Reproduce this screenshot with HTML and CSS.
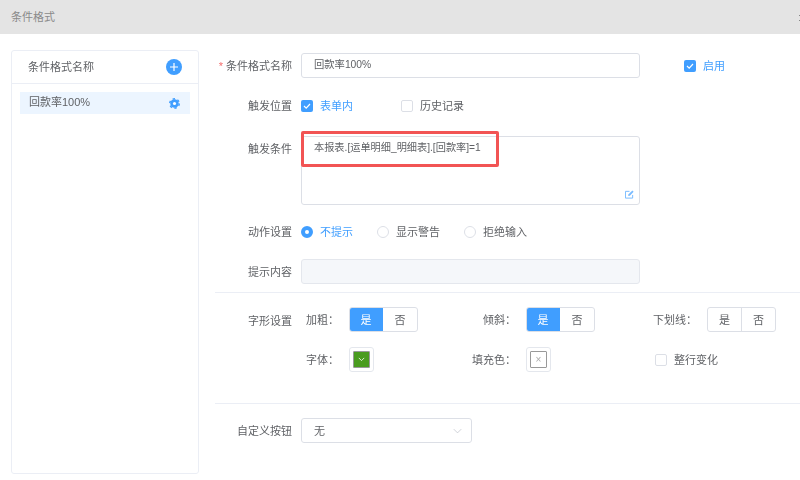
FILE: index.html
```html
<!DOCTYPE html>
<html lang="zh-CN">
<head>
    <meta charset="UTF-8">
    <title>条件格式</title>
    <link rel="stylesheet" href="styles.css">
</head>
<body>
    <div class="head">
        <span class="txt">条件格式</span>
        <svg class="head_close" viewBox="0 0 8 8"><path d="M1 1l6 6M7 1L1 7" stroke="#888" stroke-width="1"/></svg>
    </div>

    <div class="content">
        <!-- 左侧列表 -->
        <div class="side">
            <div class="side_head">
                <span class="txt">条件格式名称</span>
                <svg class="icon_add" viewBox="0 0 16 16"><circle cx="8" cy="8" r="8" fill="#409eff"/><path d="M8 4v8M4 8h8" stroke="#fff" stroke-width="1.2"/></svg>
            </div>
            <div class="side_item">
                <span class="side_text">回款率100%</span>
                <svg class="icon_gear" viewBox="0 0 12 12"><circle cx="6" cy="6" r="4.600" fill="#409eff"/><circle cx="6" cy="6" r="5.200" fill="none" stroke="#409eff" stroke-width="1.600" stroke-dasharray="2.600 2.845"/><circle cx="6" cy="6" r="1.700" fill="#fff"/></svg>
            </div>
        </div>

        <!-- 右侧表单 -->
        <div class="form">
            <div class="row row_name">
                <label class="row_label"><i>*</i> 条件格式名称</label>
                <div class="input">回款率100%</div>
                <div class="check check_enable">
                    <span class="box on"><svg viewBox="0 0 12 12"><path d="M3 6l2.200 2.200L9 4" fill="none" stroke="#fff" stroke-width="1.200"/></svg></span>
                    <span class="txt active">启用</span>
                </div>
            </div>

            <div class="row row_place">
                <label class="row_label">触发位置</label>
                <div class="check check_form">
                    <span class="box on"><svg viewBox="0 0 12 12"><path d="M3 6l2.200 2.200L9 4" fill="none" stroke="#fff" stroke-width="1.200"/></svg></span>
                    <span class="txt active">表单内</span>
                </div>
                <div class="check">
                    <span class="box"></span>
                    <span class="txt">历史记录</span>
                </div>
            </div>

            <div class="row row_cond">
                <label class="row_label">触发条件</label>
                <div class="textarea">
                    本报表.[运单明细_明细表].[回款率]=1
                    <svg class="icon_edit" viewBox="0 0 10 10"><path d="M8.500 5.500V9h-8V1.500H5" fill="none" stroke="#79bbff" stroke-width="1.100"/><path d="M3.500 6.700l.4-1.900L8.200.6l1.400 1.400-4.200 4.300z" fill="#79bbff"/></svg>
                    <div class="mark"></div>
                </div>
            </div>

            <div class="row row_action">
                <label class="row_label">动作设置</label>
                <div class="radio radio_1"><span class="dot on"></span><span class="txt active">不提示</span></div>
                <div class="radio radio_2"><span class="dot"></span><span class="txt">显示警告</span></div>
                <div class="radio"><span class="dot"></span><span class="txt">拒绝输入</span></div>
            </div>

            <div class="row row_tip">
                <label class="row_label">提示内容</label>
                <div class="input input_off"></div>
            </div>

            <div class="line"></div>

            <div class="row row_font">
                <label class="row_label">字形设置</label>
                <div class="font_grid">
                    <span class="font_label">加粗：</span>
                    <div class="seg"><span class="on">是</span><span>否</span></div>
                    <span class="font_label">倾斜：</span>
                    <div class="seg"><span class="on">是</span><span>否</span></div>
                    <span class="font_label">下划线：</span>
                    <div class="seg"><span>是</span><span>否</span></div>

                    <span class="font_label">字体：</span>
                    <div class="swatch">
                        <span class="swatch_in green"><svg viewBox="0 0 10 6"><path d="M2 1l3 3 3-3" fill="none" stroke="#fff" stroke-width=".9"/></svg></span>
                    </div>
                    <span class="font_label">填充色：</span>
                    <div class="swatch">
                        <span class="swatch_in empty">×</span>
                    </div>
                    <div class="check check_line">
                        <span class="box"></span>
                        <span class="txt">整行变化</span>
                    </div>
                </div>
            </div>

            <div class="line line_2"></div>

            <div class="row row_btn">
                <label class="row_label">自定义按钮</label>
                <div class="select">
                    <span class="txt">无</span>
                    <svg viewBox="0 0 12 7"><path d="M1 1l5 5 5-5" fill="none" stroke="#c0c4cc" stroke-width="1"/></svg>
                </div>
            </div>
        </div>
    </div>
</body>
</html>
```

FILE: styles.css
```css
*{
    margin: 0;
    padding: 0;
    box-sizing: border-box;
}
body{
    width: 800px;
    height: 480px;
    overflow: hidden;
    background-color: #fff;
    color: #606266;
    font-size: 11px;
    font-family: "Liberation Sans", "Noto Sans CJK SC", sans-serif;
    filter: blur(.35px);
}
/* 文字往上提一点 */
.txt,.row_label,.font_label{
    padding-bottom: 2px;
}
.head{
    height: 34px;
    padding-left: 11px;
    display: flex;
    align-items: center;
    justify-content: space-between;
    background-color: #e4e4e4;
    color: #8a8a8a;
}
.head_close{
    width: 8px;
    height: 8px;
    margin-right: -6px;
    margin-top: 2px;
}
.content{
    display: flex;
    padding: 16px 0 0 11px;
}

/* 左侧列表 */
.side{
    width: 188px;
    height: 424px;
    border: 1px solid #ebeef5;
    border-radius: 3px;
}
.side_head{
    height: 33px;
    padding: 0 16px 0 16px;
    display: flex;
    align-items: center;
    justify-content: space-between;
    border-bottom: 1px solid #ebeef5;
}
.icon_add{
    width: 16px;
    height: 16px;
}
.side_item{
    height: 22px;
    margin: 8px 8px 0;
    padding: 0 10px 0 9px;
    display: flex;
    align-items: center;
    justify-content: space-between;
    background-color: #ecf5ff;
}
.side_text{
    margin-top: -4px;
}
.icon_gear{
    width: 11px;
    height: 11px;
}

/* 右侧表单 */
.form{
    flex: 1;
    margin-left: 16px;
    padding-top: 3px;
}
.row{
    display: flex;
    align-items: center;
}
.row_label{
    width: 77px;
    margin-right: 9px;
    flex-shrink: 0;
    text-align: right;
}
.row_label i{
    color: #f56c6c;
    font-style: normal;
}
.input{
    width: 339px;
    height: 25px;
    padding-left: 12px;
    font-size: 10.300px;
    line-height: 22px;
    border: 1px solid #dcdfe6;
    border-radius: 3px;
}
.input_off{
    background-color: #f5f7fa;
    border-color: #e4e7ed;
}
.row_place{
    margin-top: 15px;
    height: 25px;
}
.row_cond{
    margin-top: 18px;
    align-items: flex-start;
}
.row_cond .row_label{
    margin-top: 4px;
}
.row_action{
    margin-top: 14px;
    height: 25px;
}
.row_tip{
    margin-top: 15px;
}
.row_font{
    margin-top: 14px;
    align-items: flex-start;
}
.row_font .row_label{
    margin-top: 5px;
}
.row_btn{
    margin-top: 14px;
}
.line{
    height: 1px;
    margin-top: 8px;
    background-color: #ebeef5;
}
.line_2{
    margin-top: 31px;
}

/* 勾选框 单选框 */
.check,.radio{
    display: flex;
    align-items: center;
    gap: 7px;
}
.active{
    color: #409eff;
}
.box{
    width: 12px;
    height: 12px;
    border: 1px solid #dcdfe6;
    border-radius: 2px;
    display: block;
}
.box.on{
    border: none;
    background-color: #409eff;
}
.box svg{
    display: block;
}
.check_enable{
    margin-left: 44px;
}
.check_form{
    width: 100px;
}
.dot{
    width: 12px;
    height: 12px;
    border: 1px solid #dcdfe6;
    border-radius: 50%;
}
.dot.on{
    border: 4px solid #409eff;
}
.radio_1{
    width: 76px;
}
.radio_2{
    width: 87px;
}

/* 文本域 */
.textarea{
    width: 339px;
    height: 69px;
    padding: 4px 0 0 12px;
    font-size: 10.200px;
    line-height: 14px;
    border: 1px solid #dcdfe6;
    border-radius: 3px;
    position: relative;
}
.icon_edit{
    width: 9px;
    height: 9px;
    position: absolute;
    right: 5px;
    bottom: 5px;
}
.mark{
    position: absolute;
    left: -1px;
    top: -6px;
    width: 198px;
    height: 36px;
    border: 3px solid #f25454;
    border-radius: 2px;
}

/* 字形设置 */
.font_grid{
    display: grid;
    grid-template-columns: 48px 129px 48px 129px 52px 69px;
    row-gap: 15px;
    align-items: center;
}
.font_label{
    padding-right: 10px;
    text-align: right;
    white-space: nowrap;
    justify-self: end;
}
.seg{
    width: 69px;
    height: 25px;
    display: flex;
    border: 1px solid #dcdfe6;
    border-radius: 3px;
    overflow: hidden;
}
.seg span{
    flex: 1;
    padding-bottom: 2px;
    display: flex;
    align-items: center;
    justify-content: center;
}
.seg span + span{
    border-left: 1px solid #dcdfe6;
}
.seg .on{
    flex: none;
    width: 34px;
    margin: -1px 0 -1px -1px;
    background-color: #409eff;
    color: #fff;
}
.seg .on + span{
    border-left: none;
}
.swatch{
    width: 25px;
    height: 25px;
    padding: 3px;
    border: 1px solid #e4e7ed;
    border-radius: 3px;
}
.swatch_in{
    width: 17px;
    height: 17px;
    display: flex;
    align-items: center;
    justify-content: center;
    border: 1px solid #999;
    border-radius: 1px;
}
.swatch_in svg{
    width: 9px;
}
.green{
    background-color: #4a9c1f;
}
.empty{
    color: #aaa;
    font-size: 10px;
}
.check_line{
    grid-column: 5 / 7;
}

/* 下拉框 */
.select{
    width: 171px;
    height: 25px;
    padding: 0 9px 0 12px;
    display: flex;
    align-items: center;
    justify-content: space-between;
    border: 1px solid #dcdfe6;
    border-radius: 3px;
}
.select svg{
    width: 9px;
    height: 6px;
}
```
